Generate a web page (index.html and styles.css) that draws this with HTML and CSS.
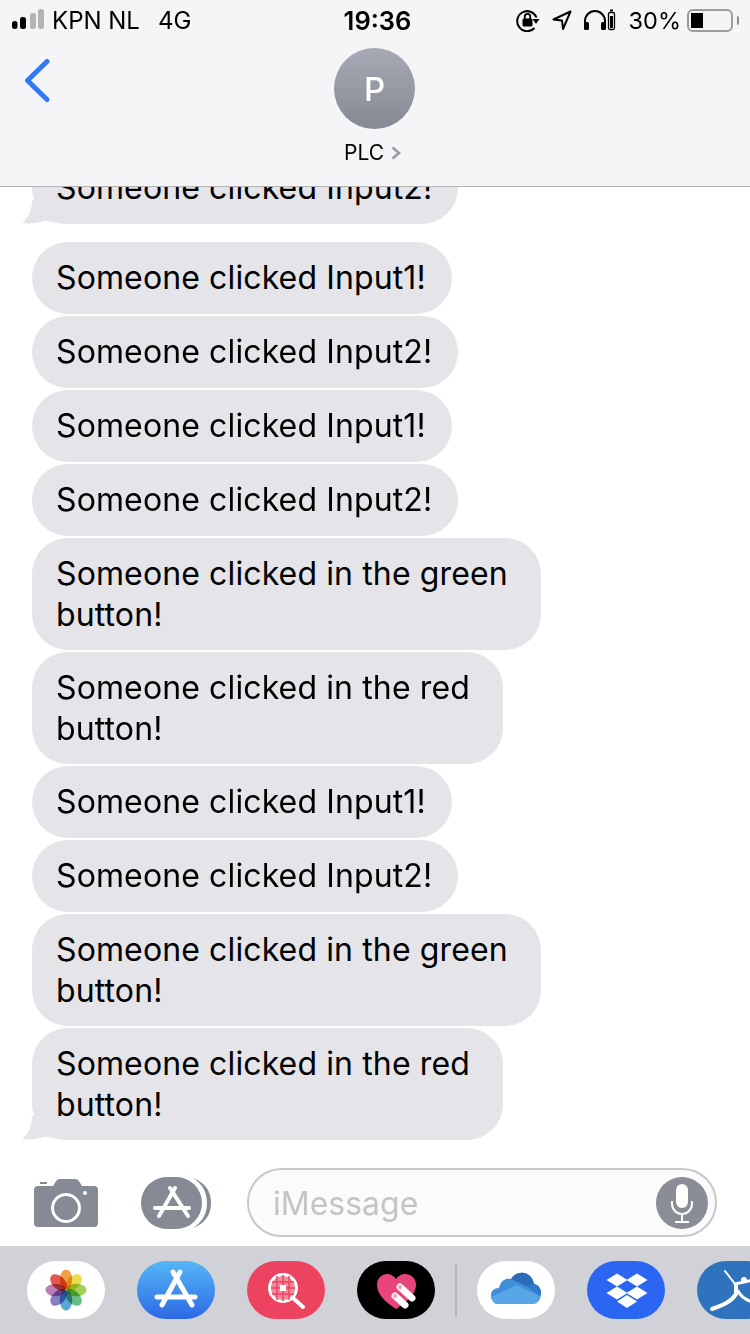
FILE: index.html

```html
<!DOCTYPE html>
<html lang="en">
<head>
  <meta charset="UTF-8">
  <meta name="viewport" content="width=device-width, initial-scale=1">
  <title>PLC - Messages</title>
  <link rel="stylesheet" href="styles.css">
</head>
<body>

<header class="top-bar">
  <div class="status-bar">
    <div class="status-left">
      <svg class="signal" width="34" height="22" viewBox="0 0 34 22">
        <rect x="0" y="12" width="5.500" height="8" rx="2.500" fill="#000"/>
        <rect x="8" y="8" width="6" height="12" rx="2.500" fill="#000"/>
        <rect x="18" y="4" width="6" height="16" rx="2.500" fill="#b4b4b6"/>
        <rect x="26" y="0" width="6" height="20" rx="2.500" fill="#b4b4b6"/>
      </svg>
      <span class="carrier">KPN NL</span>
      <span class="network">4G</span>
    </div>
    <div class="clock">19:36</div>
    <div class="status-right">
      <svg width="24" height="24" viewBox="0 0 24 24" fill="none">
        <path d="M20.500 9.500A10 10 0 1 0 18.500 20" stroke="#000" stroke-width="2"/>
        <path d="M16.500 11h7l-3.500 5z" fill="#000"/>
        <rect x="6.500" y="10.500" width="10" height="8" rx="1.500" fill="#000"/>
        <path d="M8.800 11V8.500a2.700 2.700 0 0 1 5.400 0V11" stroke="#000" stroke-width="1.800"/>
      </svg>
      <svg class="arrow" width="20" height="20" viewBox="0 0 20 20" fill="none">
        <path d="M18.500 1.500L1.500 9.500L10 10.500L11 19z" stroke="#000" stroke-width="2" stroke-linejoin="round"/>
      </svg>
      <svg class="phones" width="34" height="22" viewBox="0 0 34 22" fill="none">
        <path d="M2 17V12a10 10 0 0 1 20 0v5" stroke="#000" stroke-width="2"/>
        <rect x="1" y="13" width="5" height="8" rx="1.500" fill="#000"/>
        <rect x="18" y="13" width="5" height="8" rx="1.500" fill="#000"/>
        <rect x="25.500" y="3.500" width="6" height="17" rx="1.500" stroke="#000" stroke-width="1.300"/>
        <rect x="27" y="7" width="3" height="12" fill="#000"/>
        <rect x="27" y="0.500" width="3" height="2" fill="#000"/>
      </svg>
      <span class="percent">30%</span>
      <div class="battery"><div class="battery-level"></div></div>
      <div class="battery-tip"></div>
    </div>
  </div>

  <div class="contact-row">
    <svg class="back" width="30" height="46" viewBox="0 0 30 46" fill="none">
      <path d="M23 3.500L3.500 22.500L23 41.500" stroke="#3478f6" stroke-width="5" stroke-linecap="round" stroke-linejoin="round"/>
    </svg>
    <div class="contact">
      <div class="avatar">P</div>
      <div class="contact-name">
        PLC
        <svg width="10" height="14" viewBox="0 0 10 14" fill="none">
          <path d="M1.500 1.500L8 7L1.500 12.500" stroke="#9a9ca3" stroke-width="2.600"/>
        </svg>
      </div>
    </div>
  </div>
</header>

<main class="thread">
  <div class="bubble tail group-end">Someone clicked Input2!</div>
  <div class="bubble">Someone clicked Input1!</div>
  <div class="bubble">Someone clicked Input2!</div>
  <div class="bubble">Someone clicked Input1!</div>
  <div class="bubble">Someone clicked Input2!</div>
  <div class="bubble two-line">Someone clicked in the green<br>button!</div>
  <div class="bubble two-line">Someone clicked in the red<br>button!</div>
  <div class="bubble">Someone clicked Input1!</div>
  <div class="bubble">Someone clicked Input2!</div>
  <div class="bubble two-line">Someone clicked in the green<br>button!</div>
  <div class="bubble two-line tail">Someone clicked in the red<br>button!</div>
</main>

<section class="composer">
  <svg class="camera" width="64" height="48" viewBox="0 0 64 48">
    <path fill="#868a94" fill-rule="evenodd" d="M4 7h15l2.500-4Q23 0 26 0h15q3 0 4.500 3L48 7h12q4 0 4 4v33q0 4-4 4H4q-4 0-4-4V11q0-4 4-4zM32 14a15 15 0 1 0 .01 0zM32 17a12 12 0 1 1-.01 0zM51 12a2 2 0 1 0 .01 0z"/>
    <rect x="6" y="3" width="7" height="2" fill="#868a94"/>
  </svg>
  <svg class="apps" width="70" height="52" viewBox="0 0 70 52" fill="none">
    <path d="M52 1Q70 8 70 26T52 51Q66 42 66 26T52 1z" fill="#868a94"/>
    <rect x="0" y="0" width="61" height="52" rx="26" fill="#868a94"/>
    <path d="M29 11L47 39M34 11L18 39M14 31H48" stroke="#fff" stroke-width="4" stroke-linecap="round"/>
  </svg>
  <div class="input-box">
    <span class="placeholder">iMessage</span>
    <div class="mic">
      <svg width="26" height="42" viewBox="0 0 26 42" fill="none">
        <rect x="7" y="2" width="12" height="24" rx="6" fill="#fff"/>
        <path d="M3 19v3a10 10 0 0 0 20 0v-3M13 32v7M6 40h14" stroke="#fff" stroke-width="2"/>
      </svg>
    </div>
  </div>
</section>

<nav class="dock">
  <div class="dock-app app-photos">
    <svg width="44" height="44" viewBox="0 0 44 44">
      <g class="petals">
        <ellipse cx="22" cy="11.500" rx="6.300" ry="10" fill="#f0a043"/>
        <ellipse cx="22" cy="11.500" rx="6.300" ry="10" fill="#eedb4f" transform="rotate(45 22 22)"/>
        <ellipse cx="22" cy="11.500" rx="6.300" ry="10" fill="#a3cf58" transform="rotate(90 22 22)"/>
        <ellipse cx="22" cy="11.500" rx="6.300" ry="10" fill="#68bd8b" transform="rotate(135 22 22)"/>
        <ellipse cx="22" cy="11.500" rx="6.300" ry="10" fill="#5ba5d8" transform="rotate(180 22 22)"/>
        <ellipse cx="22" cy="11.500" rx="6.300" ry="10" fill="#8880c2" transform="rotate(225 22 22)"/>
        <ellipse cx="22" cy="11.500" rx="6.300" ry="10" fill="#b77fb6" transform="rotate(270 22 22)"/>
        <ellipse cx="22" cy="11.500" rx="6.300" ry="10" fill="#e2574a" transform="rotate(315 22 22)"/>
      </g>
    </svg>
  </div>
  <div class="dock-app app-store">
    <svg width="78" height="58" viewBox="0 0 78 58" fill="none">
      <path d="M36 11L55 44M43 11L25 44M20 36H58" stroke="#fff" stroke-width="5" stroke-linecap="round"/>
    </svg>
  </div>
  <div class="dock-app app-search">
    <svg width="78" height="58" viewBox="0 0 78 58" fill="none">
      <circle cx="36" cy="27" r="13.500" fill="#f4889c" stroke="#fff" stroke-width="3"/>
      <path d="M25 21H47M24 27H48M25 33H47M30 15V39M36 14V40M42 15V39" stroke="#ec4460" stroke-width="1.500"/>
      <rect x="33" y="24" width="6" height="6" fill="#fff"/>
      <path d="M46 37L56 46" stroke="#fff" stroke-width="4" stroke-linecap="round"/>
    </svg>
  </div>
  <div class="dock-app app-health">
    <svg width="78" height="58" viewBox="0 0 78 58" fill="none">
      <path d="M39 48C28 41 20 33 20 24C20 17 25 13 30 13C34 13 37 15 39 18C41 15 44 13 48 13C54 13 59 17 59 24C59 33 50 41 39 48z" fill="#e8457a"/>
      <path d="M43 26L55 37M38 35L48 44" stroke="#fff" stroke-width="7" stroke-linecap="round"/>
      <circle cx="43" cy="26" r="2.200" fill="#f4a6c2"/>
      <circle cx="38" cy="35" r="2.200" fill="#f4a6c2"/>
    </svg>
  </div>
  <div class="dock-divider"></div>
  <div class="dock-app app-onedrive">
    <svg width="78" height="58" viewBox="0 0 78 58">
      <path d="M22 27C24 19 29 17 34 18C37 13 42 11 47 12C53 13 56 18 57 23C62 24 64 28 64 32C64 39 60 43 55 43H21C17 43 14 39 14 34C14 30 17 27 22 27z" fill="#3f8ed8"/>
      <path d="M34 18C37 13 42 11 47 12C53 13 56 18 57 23L49 25z" fill="#2a6cb8"/>
      <path d="M49 25L57 23C62 24 64 28 64 32C64 34 63 35 63 35z" fill="#2f7ac8"/>
      <path d="M14 36L40 24L63 35C63 40 60 43 55 43H21C17 43 15 40 14 36z" fill="#58a6e6"/>
    </svg>
  </div>
  <div class="dock-app app-dropbox">
    <svg width="78" height="58" viewBox="0 0 78 58" fill="#fff">
      <path d="M30 12.500L40.500 19L30 25.500L19.500 19z"/>
      <path d="M50 12.500L60.500 19L50 25.500L39.500 19z"/>
      <path d="M30 25.500L40.500 32L30 38.500L19.500 32z"/>
      <path d="M50 25.500L60.500 32L50 38.500L39.500 32z"/>
      <path d="M40 34L50 40.500L40 47L30 40.500z"/>
    </svg>
  </div>
  <div class="dock-app app-fitness">
    <svg width="78" height="58" viewBox="0 0 78 58" fill="none">
      <circle cx="47" cy="19" r="3" fill="#fff"/>
      <path d="M28 10L38 23" stroke="#fff" stroke-width="2" stroke-linecap="round"/>
      <path d="M38 23L56 19" stroke="#fff" stroke-width="3" stroke-linecap="round"/>
      <path d="M39 24L39 33Q34 42 15 48" stroke="#fff" stroke-width="4" stroke-linecap="round"/>
      <path d="M41 30Q45 38 56 41" stroke="#fff" stroke-width="3" stroke-linecap="round"/>
    </svg>
  </div>
</nav>

</body>
</html>
```

FILE: styles.css

```css
html, body {
  margin: 0;
  padding: 0;
}
body {
  width: 750px;
  height: 1334px;
  overflow: hidden;
  display: flex;
  flex-direction: column;
  background: #fff;
  color: #000;
  font-family: 'Inter', 'Liberation Sans', sans-serif;
}

/* Top bar */
.top-bar {
  height: 186px;
  flex-shrink: 0;
  background: #f5f5f7;
  border-bottom: 1px solid #b2b2b2;
  position: relative;
  z-index: 1;
}
.status-bar {
  height: 40px;
  display: grid;
  grid-template-columns: 1fr auto 1fr;
  align-items: center;
  font-size: 24px;
}
.status-left {
  display: flex;
  align-items: center;
  padding-left: 12px;
}
.signal {
  margin-right: 6px;
}
.network {
  margin-left: 18px;
}
.clock {
  margin-left: 5px;
  font-size: 25.5px;
  font-weight: 600;
}
.status-right {
  display: flex;
  align-items: center;
  justify-content: flex-end;
  padding-right: 11px;
}
.arrow {
  margin-left: 12px;
}
.phones {
  margin-left: 11px;
}
.percent {
  margin-left: 12px;
  font-size: 23.5px;
}
.battery {
  width: 46px;
  height: 23px;
  margin-left: 6px;
  box-sizing: border-box;
  border: 2px solid #9c9c9c;
  border-radius: 6px;
  padding: 2px;
}
.battery-level {
  width: 12px;
  height: 100%;
  background: #000;
}
.battery-tip {
  width: 2px;
  height: 9px;
  margin-left: 4px;
  background: #8c8c8c;
  border-radius: 0 2px 2px 0;
}
.contact-row {
  display: flex;
  justify-content: center;
  padding: 8px 1px 0 0;
  position: relative;
}
.back {
  position: absolute;
  left: 24px;
  top: 18px;
}
.contact {
  display: flex;
  flex-direction: column;
  align-items: center;
}
.avatar {
  width: 81px;
  height: 81px;
  border-radius: 50%;
  background: linear-gradient(#a7aab5, #858993);
  color: #fff;
  font-size: 33px;
  font-weight: 500;
  display: flex;
  align-items: center;
  justify-content: center;
}
.contact-name {
  margin-top: 11px;
  margin-left: -4px;
  font-size: 21px;
  line-height: 26px;
  display: flex;
  align-items: center;
  gap: 7px;
}

/* Messages */
.thread {
  flex: 1;
  min-height: 0;
  overflow: hidden;
  display: flex;
  flex-direction: column;
  justify-content: flex-end;
  align-items: flex-start;
  gap: 2px;
  padding-left: 32px;
}
.bubble {
  position: relative;
  flex-shrink: 0;
  background: #e4e4e9;
  border-radius: 36px;
  padding: 15px 26px 16px 24px;
  font-size: 32px;
  line-height: 41px;
  letter-spacing: 0.12px;
}
.two-line {
  padding: 15px 33px 15px 24px;
}
.group-end {
  margin-bottom: 16px;
}
.tail::before {
  content: "";
  position: absolute;
  left: -10px;
  bottom: 0;
  width: 50px;
  height: 24px;
  background: #e4e4e9;
  clip-path: path("M10 0C10 10 6 19 0 23C8 24 16 23 23 20.500C30 22 38 24 50 24L50 0z");
}

/* Compose row */
.composer {
  height: 106px;
  flex-shrink: 0;
  box-sizing: border-box;
  display: flex;
  align-items: center;
  padding: 28px 0 9px 34px;
}
.apps {
  margin-left: 43px;
}
.input-box {
  width: 470px;
  height: 69px;
  margin-left: 36px;
  box-sizing: border-box;
  border: 2px solid #c8c8cc;
  border-radius: 35px;
  background: #fbfbfb;
  display: flex;
  align-items: center;
  justify-content: space-between;
  padding: 0 7px 0 24px;
}
.placeholder {
  color: #c4c4c8;
  font-size: 32px;
  padding-top: 2px;
}
.mic {
  width: 52px;
  height: 52px;
  border-radius: 50%;
  background: #8a8d96;
  display: flex;
  align-items: center;
  justify-content: center;
}

/* App drawer */
.dock {
  height: 88px;
  flex-shrink: 0;
  box-sizing: border-box;
  background: #d1d2d8;
  display: flex;
  align-items: center;
  gap: 32px;
  padding: 0 0 0 27px;
  overflow: hidden;
}
.dock-app {
  width: 78px;
  height: 58px;
  flex-shrink: 0;
  border-radius: 29px / 29px;
  display: flex;
  align-items: center;
  justify-content: center;
}
.dock-divider {
  width: 2px;
  height: 52px;
  flex-shrink: 0;
  margin: 0 -12px;
  background: #b2b3b9;
}
.app-photos, .app-onedrive {
  background: #fff;
}
.petals ellipse {
  mix-blend-mode: multiply;
}
.app-store {
  background: linear-gradient(#55b7f6, #2c69e4);
}
.app-search {
  background: #ec4460;
}
.app-health {
  background: #000;
}
.app-dropbox {
  background: #2b66f2;
}
.app-fitness {
  background: #2f72bd;
}
```
